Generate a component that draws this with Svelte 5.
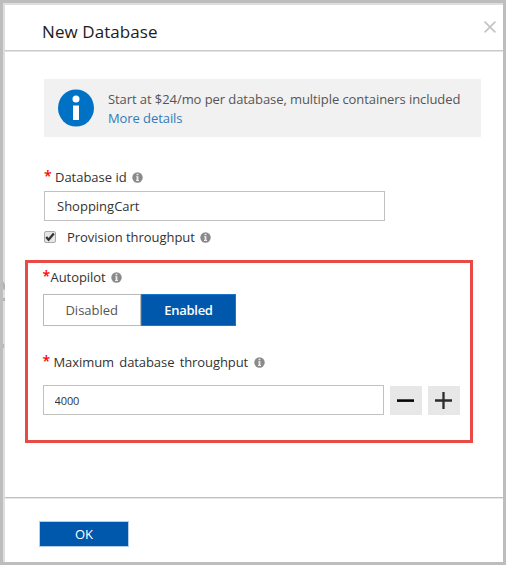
<script>
  let databaseId = $state('ShoppingCart');
  let throughput = $state(4000);
  let provision = $state(true);
  let autopilot = $state(true);
</script>

{#snippet info()}
  <svg class="info" viewBox="0 0 11 11" aria-hidden="true">
    <circle cx="5.5" cy="5.5" r="5.2" fill="#8a8a8a" />
    <path d="M4.6 1.8h1.8v1.5H4.6zM4.1 4.2h2.3v3.9h.6V9H4v-.9h.6V5.1h-.5z" fill="#eee" />
  </svg>
{/snippet}

<div class="dialog">
  <svg class="edge" width="2" height="84" viewBox="0 0 2 84" aria-hidden="true">
    <path d="M0 0h1l1 3v5H1L0 6zM0 16h2v3H0zM0 62h1v4H0z" fill="#b3b3b3" />
  </svg>
  <header>
    <h1>New Database</h1>
    <button class="close" aria-label="Close">
      <svg width="12" height="12" viewBox="0 0 12 12"><path d="M.6.6l10.8 10.8M11.4.6L.6 11.4" stroke="#c2c2c2" stroke-width="1.6" /></svg>
    </button>
  </header>

  <main>
    <section class="notice">
      <svg width="36" height="38" viewBox="0 0 36 38">
        <ellipse cx="18" cy="19" rx="18" ry="18.6" fill="#0072c6" />
        <circle cx="18" cy="10" r="3.5" fill="#fff" />
        <path d="M15 16.5h6V31h-6z" fill="#fff" />
      </svg>
      <div class="message">
        <span class="start">Start at $24/mo per database, multiple containers included</span>
        <span class="more">More details</span>
      </div>
    </section>

    <div class="label id-label"><b>*</b><span class="t-id">Database id</span>{@render info()}</div>
    <input class="id" bind:value={databaseId} aria-label="Database id" />
    <div class="provision">
      <button class="check" aria-label="Provision throughput" onclick={() => (provision = !provision)}>
        {#if provision}<svg width="10" height="10" viewBox="0 0 10 10"><path d="M1.2 5l2.4 2.8L8.8 1.6" fill="none" stroke="#333" stroke-width="2.3" /></svg>{/if}
      </button>
      <span class="t-prov">Provision throughput</span>{@render info()}
    </div>

    <section class="highlight">
      <div class="label auto-label"><b>*</b><span class="t-auto">Autopilot</span>{@render info()}</div>
      <div class="toggle">
        <button class="off" class:on={!autopilot} onclick={() => (autopilot = false)}><span class="t-dis">Disabled</span></button>
        <button class:on={autopilot} onclick={() => (autopilot = true)}><span class="t-en">Enabled</span></button>
      </div>
      <div class="label max-label"><b>*</b><span class="t-max">Maximum database throughput</span>{@render info()}</div>
      <div class="stepper">
        <input class="amount" bind:value={throughput} aria-label="Maximum database throughput" />
        <button aria-label="Decrease" onclick={() => (throughput -= 100)}>
          <svg width="17" height="17" viewBox="0 0 17 17"><path d="M0 8.6h17" stroke="#050505" stroke-width="2.6" /></svg>
        </button>
        <button aria-label="Increase" onclick={() => (throughput += 100)}>
          <svg width="17" height="17" viewBox="0 0 17 17"><path d="M0 8.5h17M8.5 0v17" stroke="#2b2b2b" stroke-width="2.3" /></svg>
        </button>
      </div>
    </section>
  </main>

  <footer><button class="ok">OK</button></footer>
</div>

<style>
  :global(body) { margin: 0; }
  .dialog, .dialog * { box-sizing: border-box; }
  .dialog {
    position: relative;
    width: 506px;
    height: 565px;
    display: flex;
    flex-direction: column;
    border: 3px solid #bdbdbd;
    background: #fff;
    box-shadow: inset 2px 2px 0 #dedede;
    padding: 2px 0 0 2px;
    font-family: "Open Sans", "Noto Sans", sans-serif;
    font-size: 13px;
    color: #333;
    overflow: hidden;
    white-space: nowrap;
  }
  button, input { font: inherit; margin: 0; padding: 0; border-radius: 0; outline: none; }
  svg { display: block; flex: none; }
  .edge { position: absolute; left: 0; top: 279px; }
  header {
    height: 47px;
    flex: none;
    display: flex;
    justify-content: space-between;
    border-bottom: 1px solid #e4e4e4;
    box-shadow: inset 0 -1px #cbcbcb;
    padding: 0 7px 0 37px;
  }
  h1 { margin: 14px 0 0; font-weight: 400; font-size: 17px; line-height: 26px; color: #1c1c1c; letter-spacing: .08px; }
  .close { border: 0; background: none; height: 12px; margin-top: 16px; }
  main { flex: 1; }
  .notice {
    width: 437px;
    height: 58px;
    margin: 27px 0 0 39px;
    padding: 10px 14px;
    display: flex;
    background: #f1f1f1;
  }
  .message { display: flex; flex-direction: column; margin-left: 14px; padding-top: 1px; line-height: 19px; color: #555; }
  .start { letter-spacing: -.075px; }
  .more { color: #337ab7; letter-spacing: -.08px; }
  .label { display: flex; align-items: center; height: 20px; }
  b { color: #f00; font-size: 14px; font-weight: 600; width: 11px; line-height: 18px; height: 20px; }
  .info { width: 11px; height: 11px; margin-left: 5px; }
  .id-label { margin: 30px 0 0 39px; }
  .t-id { letter-spacing: -.02px; }
  input { display: block; border: 1.5px solid #c1c1c1; background: #fff; color: #333; }
  .id { width: 341px; height: 30px; margin: 4px 0 0 39px; padding-left: 12px; }
  .provision { display: flex; align-items: center; height: 20px; margin: 6px 0 0 39px; }
  .check {
    width: 12px;
    height: 12px;
    display: grid;
    place-items: center;
    border: 1px solid #aaa;
    border-radius: 2px;
    background: #e6e6e6;
    margin-right: 11px;
  }
  .t-prov { letter-spacing: -.04px; }
  .highlight { width: 448px; height: 183px; margin: 13px 0 0 20px; border: 3px solid #e84b45; padding: 4px 0 0 14.5px; }
  .auto-label b { width: 8px; }
  .t-auto { letter-spacing: -.05px; }
  .toggle { display: flex; width: 194px; height: 32px; margin-top: 7px; }
  .toggle button { width: 95px; border: 1px solid #1976c9; background: #fff; color: #555; }
  .toggle .off { width: 98.5px; border: 1.5px solid #bababa; border-right: 1px solid #bababa; }
  .toggle .on { background: #0058ad; color: #fff; font-weight: 600; }
  .t-en { letter-spacing: -.3px; }
  .max-label { margin-top: 26px; }
  .t-max { word-spacing: 2px; letter-spacing: -.08px; }
  .max-label .info { margin-left: 6px; }
  .stepper { display: flex; align-items: center; margin-top: 13px; }
  .amount { width: 341px; height: 30px; padding-left: 11px; font-size: 11px; letter-spacing: -.1px; }
  .stepper button { width: 32px; height: 29px; margin-left: 6px; border: 0; background: #e7e7e7; display: grid; place-items: center; }
  footer { height: 65px; flex: none; border-top: 1px solid #bfbfbf; box-shadow: inset 0 1px #e8e8e8; padding: 23px 0 0 34px; }
  .ok { display: block; width: 90px; height: 26px; border: 1px solid #b5cfe8; background: #0058ad; color: #fff; }
</style>
